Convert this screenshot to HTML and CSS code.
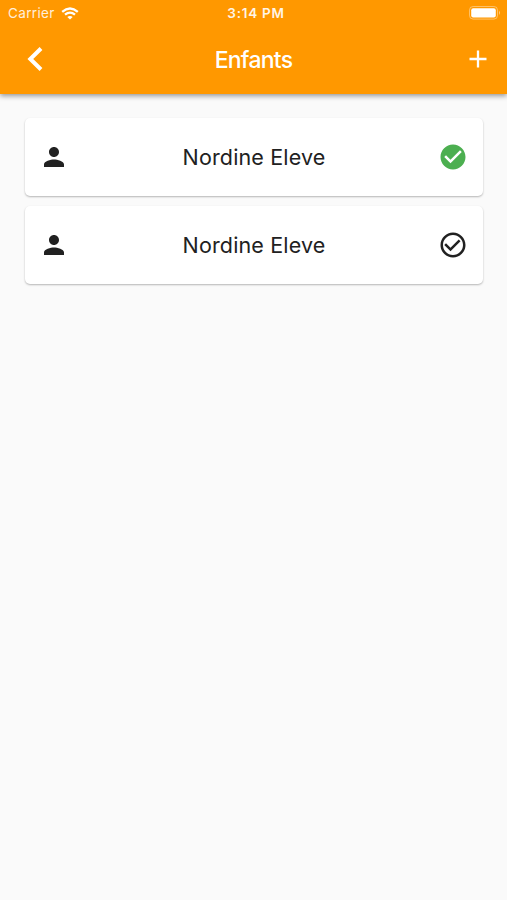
FILE: index.html
```html
<!DOCTYPE html>
<html lang="fr">
<head>
<meta charset="utf-8">
<title>Enfants</title>
<link rel="stylesheet" href="styles.css">
</head>
<body>
<header class="header">
  <div class="status">
    <div class="carrier"><span class="carrier-name">Carrier</span>
      <svg class="wifi" width="18" height="13" viewBox="0 0 18 13" fill="none" stroke="#fff" stroke-width="2.3"><path d="M1.2 4.8Q9-1.9 16.8 4.8M4 7.7Q9 3.5 14 7.7"/><path d="M9 12.6 6.3 9.9Q9 7.9 11.7 9.9Z" fill="#fff" stroke="none"/></svg>
    </div>
    <span class="time">3:14 PM</span>
    <svg class="battery" width="32" height="14" viewBox="0 0 32 14"><rect x=".5" y=".5" width="28" height="12.6" rx="3.6" fill="none" stroke="#fff" stroke-opacity=".4"/><rect x="2.2" y="2.2" width="24.6" height="9.2" rx="2" fill="#fff"/><path d="M30 4.7q2 2 0 4.2z" fill="#fff" fill-opacity=".5"/></svg>
  </div>
  <nav class="nav">
    <svg class="back" width="18" height="26" viewBox="0 0 18 26" fill="none" stroke="#fff" stroke-width="4"><path d="M15 2.5 4.3 13 15 23.5"/></svg>
    <h1 class="title">Enfants</h1>
    <svg class="add" width="18" height="18" viewBox="0 0 18 18" stroke="#fff" stroke-width="2.3"><path d="M.5 9h17M9 .5v17"/></svg>
  </nav>
</header>
<main class="list">
  <article class="card">
    <svg class="icon" viewBox="0 0 24 24"><path d="M12 12c2.21 0 4-1.79 4-4s-1.79-4-4-4-4 1.79-4 4 1.79 4 4 4zm0 2c-2.67 0-8 1.34-8 4v2h16v-2c0-2.66-5.33-4-8-4z"/></svg>
    <span class="name">Nordine Eleve</span>
    <svg class="icon selected" viewBox="0 0 24 24"><path d="M12 2C6.48 2 2 6.48 2 12s4.48 10 10 10 10-4.48 10-10S17.52 2 12 2zm-2 15-5-5 1.41-1.41L10 14.17l7.59-7.59L19 8l-9 9z"/></svg>
  </article>
  <article class="card">
    <svg class="icon" viewBox="0 0 24 24"><path d="M12 12c2.21 0 4-1.79 4-4s-1.79-4-4-4-4 1.79-4 4 1.79 4 4 4zm0 2c-2.67 0-8 1.34-8 4v2h16v-2c0-2.66-5.33-4-8-4z"/></svg>
    <span class="name">Nordine Eleve</span>
    <svg class="icon" viewBox="0 0 24 24"><path d="M16.59 7.58 10 14.17l-3.59-3.58L5 12l5 5 8-8-1.41-1.42zM12 2C6.48 2 2 6.48 2 12s4.48 10 10 10 10-4.48 10-10S17.52 2 12 2zm0 18c-4.42 0-8-3.58-8-8s3.58-8 8-8 8 3.58 8 8-3.58 8-8 8z"/></svg>
  </article>
</main>
</body>
</html>
```
FILE: styles.css
```css
* { box-sizing: border-box; }
body {
  margin: 0;
  min-height: 900px;
  background: #fafafa;
  font-family: Inter, "Liberation Sans", sans-serif;
  color: #212121;
}
.header {
  height: 94px;
  background: #ff9800;
  color: #fff;
  box-shadow: 0 2px 5px rgba(0, 0, 0, .4);
}
.status {
  display: grid;
  grid-template-columns: 1fr auto 1fr;
  align-items: center;
  height: 26px;
  padding: 0 6px 0 8px;
  font-size: 13.5px;
}
.carrier { display: flex; align-items: center; gap: 6px; }
.carrier-name { letter-spacing: .35px; opacity: .85; }
.time { font-size: 13.5px; font-weight: 600; letter-spacing: .75px; opacity: .9; margin-left: 3px; }
.battery { justify-self: end; }
.nav {
  display: grid;
  grid-template-columns: 1fr auto 1fr;
  align-items: center;
  height: 66px;
  padding: 0 20px 0 26px;
}
.title { margin: 0 6px 0 0; padding-top: 2px; font-size: 23px; font-weight: 500; letter-spacing: -.75px; }
.add { justify-self: end; }
.list {
  display: flex;
  flex-direction: column;
  gap: 10px;
  padding: 24.4px 24px 0 25px;
}
.card {
  display: flex;
  align-items: center;
  justify-content: space-between;
  height: 78px;
  padding: 0 15px 0 14px;
  background: #fff;
  border-radius: 5px;
  box-shadow: 0 1px 2px rgba(0, 0, 0, .28);
}
.icon { width: 30px; height: 30px; fill: #212121; }
.selected { fill: #4caf50; }
.name { padding-left: 1px; font-size: 21.5px; letter-spacing: .15px; }
```
